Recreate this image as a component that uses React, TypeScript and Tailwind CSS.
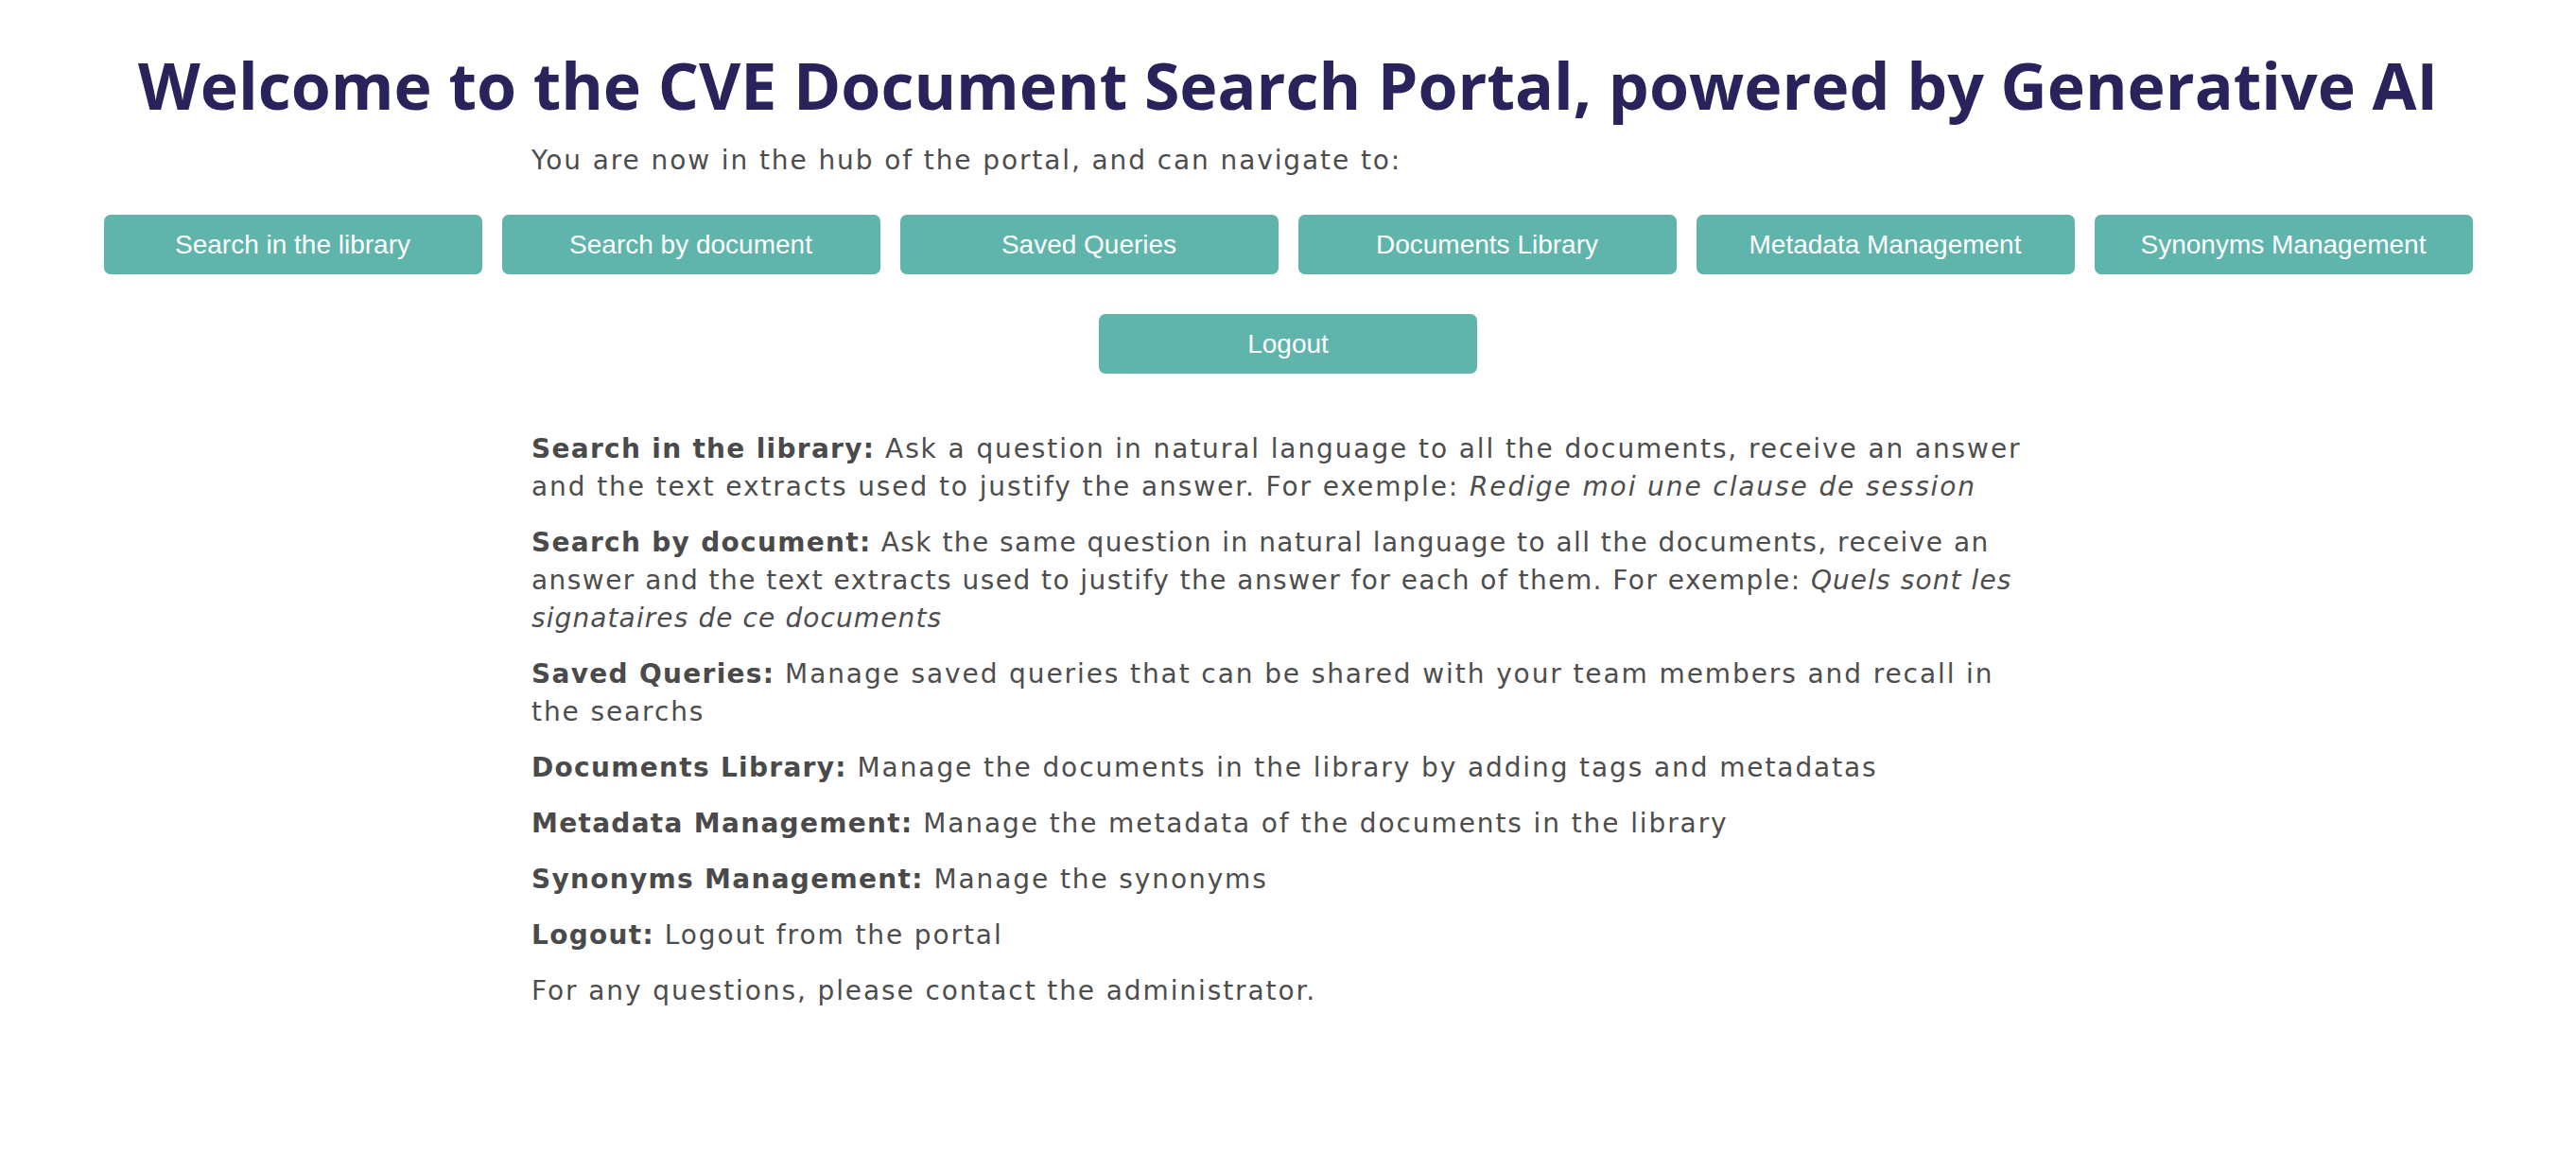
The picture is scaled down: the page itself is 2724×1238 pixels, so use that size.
const NAVY = "#29235c";

const links = [
  "Search in the library",
  "Search by document",
  "Saved Queries",
  "Documents Library",
  "Metadata Management",
  "Synonyms Management",
];

export default function App() {
  return (
    <div className="min-h-screen bg-white font-['DejaVu_Sans',sans-serif] text-[#4d4d4d]">
      <h1
        className="pt-[50px] text-center font-['Open_Sans',sans-serif] text-[68px] font-bold leading-[80px]"
        style={{ color: NAVY }}
      >
        Welcome to the CVE Document Search Portal, powered by Generative AI
      </h1>

      <p className="mx-auto mt-[20px] max-w-[1600px] text-[28px] leading-[40px] tracking-[1.9px]">
        You are now in the hub of the portal, and can navigate to:
      </p>

      {/* Nav buttons */}
      <div className="mt-[37px] flex flex-col items-center gap-[42px] font-['Liberation_Sans',Arial,sans-serif]">
        <div className="flex gap-[21px]">
          {links.map((l) => (
            <button
              key={l}
              className="h-[63px] w-[400px] rounded-[7px] bg-[#5fb4ab] text-[28px] text-white"
            >
              {l}
            </button>
          ))}
        </div>
        <button className="h-[63px] w-[400px] rounded-[7px] bg-[#5fb4ab] text-[28px] text-white">
          Logout
        </button>
      </div>

      {/* Descriptions */}
      <div className="mx-auto mt-[60px] flex max-w-[1600px] flex-col gap-[19px] text-[28px] leading-[40px] tracking-[1.9px]">
        <p>
          <b className="tracking-[1.3px] text-[#4a4a4a]">Search in the library:</b> Ask a question in natural language
          to all the documents, receive an answer and the text extracts used to justify the answer. For exemple:{" "}
          <i>Redige moi une clause de session</i>
        </p>
        <p className="tracking-[1.45px]">
          <b className="tracking-[1.3px] text-[#4a4a4a]">Search by document:</b> Ask the same question in natural
          language to all the documents, receive an answer and the text extracts used to justify the answer for each
          of them. For exemple: <i className="tracking-[1.1px]">Quels sont les signataires de ce documents</i>
        </p>
        <p>
          <b className="tracking-[1.3px] text-[#4a4a4a]">Saved Queries:</b> Manage saved queries that can be shared
          with your team members and recall in the searchs
        </p>
        <p>
          <b className="tracking-[1.3px] text-[#4a4a4a]">Documents Library:</b> Manage the documents in the library by
          adding tags and metadatas
        </p>
        <p>
          <b className="tracking-[1.3px] text-[#4a4a4a]">Metadata Management:</b> Manage the metadata of the documents
          in the library
        </p>
        <p>
          <b className="tracking-[1.3px] text-[#4a4a4a]">Synonyms Management:</b> Manage the synonyms
        </p>
        <p>
          <b className="tracking-[1.3px] text-[#4a4a4a]">Logout:</b> Logout from the portal
        </p>
        <p>For any questions, please contact the administrator.</p>
      </div>
    </div>
  );
}
